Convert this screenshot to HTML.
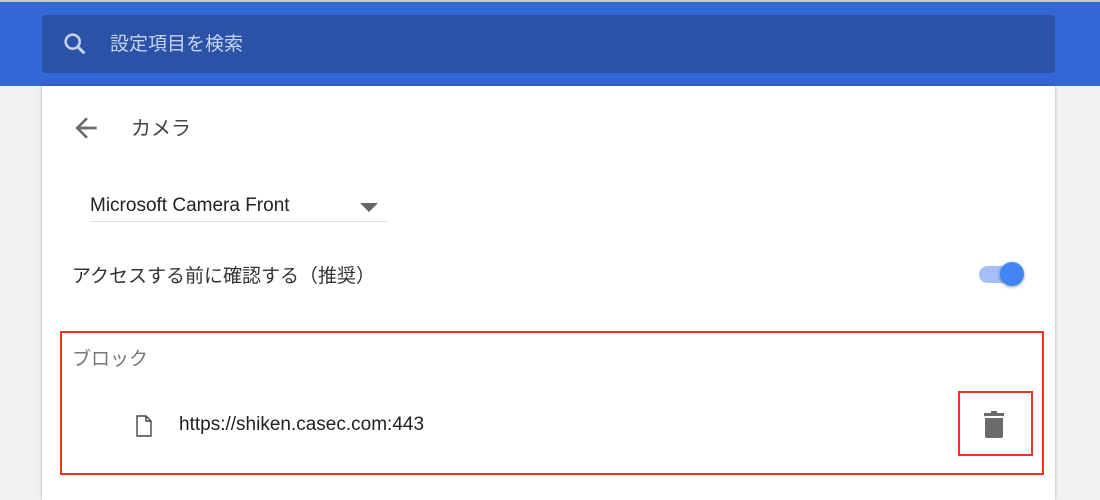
<!DOCTYPE html>
<html><head><meta charset="utf-8"><style>
body{margin:0;width:1100px;height:500px;overflow:hidden;background:#f1f1f1;font-family:"Liberation Sans","Noto Sans CJK JP",sans-serif;position:relative}
.top{position:absolute;left:0;top:0;width:1100px;height:86px;background:#3367d6;border-top:2px solid #c8c8c8;box-sizing:border-box}
.search{position:absolute;left:42px;top:15px;width:1013px;height:58px;background:#2a52a7;border-radius:3px}
.search span{position:absolute;left:68px;top:14px;font-size:19px;color:#c6d3ee}
.card{position:absolute;left:42px;top:86px;width:1013px;height:414px;background:#fff;box-shadow:0 0 3px rgba(0,0,0,.3)}
.t{position:absolute;white-space:nowrap}
.red{position:absolute;border:2px solid #f03020}
</style></head><body>
<div class="top"></div>
<div class="search">
<svg style="position:absolute;left:19px;top:15px" width="28" height="28" viewBox="0 0 24 24"><circle cx="10" cy="10" r="6" fill="none" stroke="#c6d3ee" stroke-width="2.2"/><path d="M14.5 14.5L20 20" stroke="#c6d3ee" stroke-width="2.6"/></svg>
<span>設定項目を検索</span></div>
<div class="card">
<svg style="position:absolute;left:28px;top:26px" width="32" height="32" viewBox="0 0 24 24"><path d="M20 11H7.8l5.6-5.6L12 4l-8 8 8 8 1.4-1.4L7.8 13H20z" fill="#6b6b6b"/></svg>
<div class="t" style="left:89px;top:26px;font-size:20px;color:#444">カメラ</div>
<div class="t" style="left:48px;top:109px;font-size:19px;color:#222">Microsoft Camera Front</div>
<div style="position:absolute;left:48px;top:135px;width:298px;height:1px;background:#ddd"></div>
<div style="position:absolute;left:318px;top:117px;width:0;height:0;border-left:9px solid transparent;border-right:9px solid transparent;border-top:9px solid #666"></div>
<div class="t" style="left:30px;top:175px;font-size:19px;color:#333">アクセスする前に確認する（推奨）</div>
<div style="position:absolute;left:937px;top:180px;width:40px;height:17px;border-radius:9px;background:#a3bff5"></div>
<div style="position:absolute;left:958px;top:176px;width:24px;height:24px;border-radius:50%;background:#4285f4;box-shadow:0 1px 3px rgba(0,0,0,.4)"></div>
<div class="t" style="left:30px;top:258px;font-size:19px;color:#777">ブロック</div>
<svg style="position:absolute;left:92px;top:329px" width="20" height="22" viewBox="0 0 20 22"><path d="M3 1h9l5 5v15H3z M12 1v5h5" fill="none" stroke="#444" stroke-width="1.4"/></svg>
<div class="t" style="left:137px;top:328px;font-size:19px;color:#222">https://shiken.casec.com:443</div>
<svg style="position:absolute;left:941px;top:325px" width="22" height="28" viewBox="0 0 22 28"><rect x="1" y="2" width="20" height="3" fill="#6b6b6b"/><rect x="8" y="0" width="6" height="3" fill="#6b6b6b"/><path d="M2 7h18v18a2 2 0 0 1-2 2H4a2 2 0 0 1-2-2z" fill="#6b6b6b"/></svg>
</div>
<div class="red" style="left:60px;top:331px;width:980px;height:140px"></div>
<div class="red" style="left:958px;top:391px;width:71px;height:61px"></div>
</body></html>
